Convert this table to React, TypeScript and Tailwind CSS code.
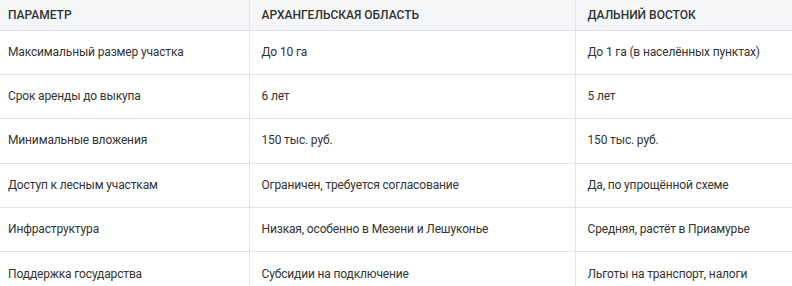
import React from "react";

const rows: [string, string, string][] = [
  ["Максимальный размер участка", "До 10 га", "До 1 га (в населённых пунктах)"],
  ["Срок аренды до выкупа", "6 лет", "5 лет"],
  ["Минимальные вложения", "150 тыс. руб.", "150 тыс. руб."],
  ["Доступ к лесным участкам", "Ограничен, требуется согласование", "Да, по упрощённой схеме"],
  ["Инфраструктура", "Низкая, особенно в Мезени и Лешуконье", "Средняя, растёт в Приамурье"],
  ["Поддержка государства", "Субсидии на подключение", "Льготы на транспорт, налоги"],
];

export default function App() {
  return (
    <div
      className="w-[792px] h-[286px] overflow-hidden bg-white"
      style={{ fontFamily: 'Roboto, "Liberation Sans", sans-serif' }}
    >
      <table className="w-[792px] border-collapse table-fixed">
        <colgroup>
          <col className="w-[249px]" />
          <col className="w-[326px]" />
          <col className="w-[217px]" />
        </colgroup>
        <thead>
          <tr className="bg-[#f5f6f8] border-b border-[#e2e4e9]">
            <th className="h-[30px] pl-2 pr-3 text-left text-[12px] leading-[18px] font-medium text-[#333] whitespace-nowrap">ПАРАМЕТР</th>
            <th className="h-[30px] px-3 text-left text-[12px] leading-[18px] font-medium text-[#333] border-l border-[#e2e4e9] whitespace-nowrap">АРХАНГЕЛЬСКАЯ ОБЛАСТЬ</th>
            <th className="h-[30px] px-3 text-left text-[12px] leading-[18px] font-medium text-[#333] border-l border-[#e2e4e9] whitespace-nowrap">ДАЛЬНИЙ ВОСТОК</th>
          </tr>
        </thead>
        <tbody>
          {rows.map((r, i) => (
            <tr key={i} className="border-b border-[#e2e4e9]">
              <td className="h-[44.4px] pl-2 pr-3 text-[12px] leading-[19px] tracking-[-0.15px] text-[#333] whitespace-nowrap">{r[0]}</td>
              <td className="h-[44.4px] px-3 text-[12px] leading-[19px] tracking-[-0.15px] text-[#333] border-l border-[#e2e4e9] whitespace-nowrap">{r[1]}</td>
              <td className="h-[44.4px] px-3 text-[12px] leading-[19px] tracking-[-0.15px] text-[#333] border-l border-[#e2e4e9] whitespace-nowrap">{r[2]}</td>
            </tr>
          ))}
        </tbody>
      </table>
    </div>
  );
}
